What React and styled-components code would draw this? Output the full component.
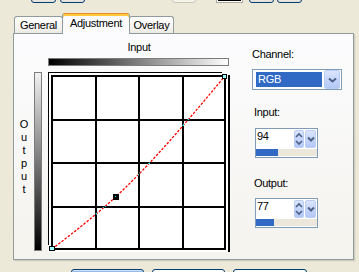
import React from "react";
import styled, { createGlobalStyle } from "styled-components";

const GlobalStyle = createGlobalStyle`
  html, body { margin: 0; padding: 0; background: #ece9d8; }
  body { font-family: "Liberation Sans", Arial, sans-serif; }
`;

const Window = styled.div`
  width: 359px;
  height: 272px;
  overflow: hidden;
  background: #ece9d8;
  font-family: "Liberation Sans", Arial, sans-serif;
  font-size: 11px;
  color: #000;
  letter-spacing: -0.3px;
`;

const TopStrip = styled.div`
  display: flex;
  align-items: flex-end;
  height: 3px;
`;

const XPButton = styled.div`
  box-sizing: border-box;
  flex: none;
  width: ${(p) => p.$w}px;
  height: ${(p) => p.$h ?? 22}px;
  margin-left: ${(p) => p.$ml ?? 0}px;
  border: 1px solid ${(p) => (p.$disabled ? "#c9c7ba" : "#003c74")};
  border-radius: 3px;
  background: ${(p) =>
    p.$disabled ? "#f5f4ea" : "linear-gradient(#ffffff, #f4f3ee 70%, #e3e0d5)"};
  box-shadow: ${(p) =>
    p.$default ? "inset 0 0 0 1px #cee7ff, inset 0 0 0 2px #98b8ea" : "none"};
`;

const Swatch = styled.div`
  box-sizing: border-box;
  flex: none;
  width: ${(p) => p.$w}px;
  height: 22px;
  margin-left: ${(p) => p.$ml}px;
  border: 1px solid #aca899;
  padding: 1px;
  background: #fff;
`;

const SwatchFill = styled.div`
  width: 100%;
  height: 100%;
  background: #000;
`;

const TabRow = styled.div`
  position: relative;
  z-index: 1;
  display: flex;
  align-items: flex-end;
  height: 20px;
  margin-top: 10px;
  padding-left: 14px;
`;

const Tab = styled.div`
  position: relative;
  z-index: ${(p) => (p.$active ? 2 : 1)};
  box-sizing: border-box;
  flex: none;
  width: ${(p) => p.$w}px;
  height: ${(p) => (p.$active ? 21 : 17)}px;
  margin-left: ${(p) => (p.$first ? 0 : -1)}px;
  margin-bottom: ${(p) => (p.$active ? -1 : 0)}px;
  padding-top: ${(p) => (p.$active ? 3 : 2)}px;
  border: 1px solid #919b9c;
  border-bottom: none;
  border-top-color: ${(p) => (p.$active ? "#e68b2c" : "#919b9c")};
  border-radius: 3px 3px 0 0;
  background: ${(p) =>
    p.$active ? "#fcfcfe" : "linear-gradient(#ffffff, #f6f5f1 60%, #ebeae4)"};
  box-shadow: ${(p) => (p.$active ? "inset 0 2px 0 #ffc83c" : "none")};
  text-align: center;
  line-height: 13px;
  white-space: nowrap;
`;

const Panel = styled.div`
  box-sizing: border-box;
  width: 341px;
  height: 227px;
  margin-left: 13px;
  padding-top: 7px;
  border: 1px solid #919b9c;
  background: linear-gradient(#fcfcfe, #f4f3ee);
  box-shadow: 1px 1px 0 #d0cebf, 2px 2px 0 #e3e0d0;
  display: flex;
  align-items: flex-start;
`;

const CurveArea = styled.div`
  display: grid;
  grid-template-columns: 20px 14px 182px;
  grid-template-rows: 17px 14px 180px;
`;

const AxisTitle = styled.div`
  grid-column: 3;
  grid-row: 1;
  text-align: center;
  line-height: 13px;
`;

const HRamp = styled.div`
  grid-column: 3;
  grid-row: 2;
  box-sizing: border-box;
  width: 181px;
  height: 8px;
  border: 1px solid #7c7c7c;
  background: linear-gradient(to right, #000, #fff);
`;

const VRamp = styled.div`
  grid-column: 2;
  grid-row: 3;
  box-sizing: border-box;
  width: 8px;
  height: 179px;
  border: 1px solid #7c7c7c;
  background: linear-gradient(#f2f2f2, #000);
`;

const VLabel = styled.div`
  grid-column: 1;
  grid-row: 3;
  align-self: start;
  margin-top: 46px;
  display: flex;
  flex-direction: column;
  align-items: center;
  line-height: 13px;
`;

const GraphBox = styled.div`
  grid-column: 3;
  grid-row: 3;
  width: 182px;
  height: 180px;
  background: #fff;
  svg { display: block; }
`;

const Side = styled.div`
  margin-left: 22px;
  padding-top: 7px;
  display: flex;
  flex-direction: column;
  align-items: flex-start;
`;

const FieldLabel = styled.div`
  line-height: 13px;
  margin-top: ${(p) => p.$mt ?? 0}px;
  margin-left: ${(p) => p.$ml ?? 0}px;
`;

const Select = styled.div`
  box-sizing: border-box;
  width: 90px;
  height: 21px;
  margin-top: 8px;
  border: 1px solid #7f9db9;
  background: #fff;
  display: flex;
  align-items: center;
  gap: 2px;
  padding: 0 1px 0 3px;
`;

const SelectValue = styled.div`
  flex: 1;
  height: 15px;
  line-height: 15px;
  padding-left: 2px;
  background: #316ac5;
  color: #fff;
`;

const BlueButton = styled.div`
  box-sizing: border-box;
  flex: none;
  width: ${(p) => p.$w}px;
  height: ${(p) => p.$h}px;
  border: 1px solid #bccdf5;
  border-radius: 2px;
  background: linear-gradient(#dbe5fd, #c5d5fb 50%, #b4c8f6);
  display: flex;
  align-items: center;
  justify-content: center;
  svg { display: block; }
`;

const Spinner = styled.div`
  box-sizing: border-box;
  width: 63px;
  height: 30px;
  margin-top: ${(p) => p.$mt}px;
  margin-left: 3px;
  border: 1px solid #7f9db9;
  background: #fff;
  display: flex;
  flex-direction: column;
`;

const SpinTop = styled.div`
  display: flex;
  height: 20px;
  padding: 1px 1px 0 0;
  box-sizing: border-box;
  gap: 1px;
`;

const SpinValue = styled.div`
  flex: 1;
  padding-left: 1px;
  padding-top: 0px;
  line-height: 13px;
`;

const Meter = styled.div`
  height: 7px;
  background: #ebe8db;
`;

const MeterFill = styled.div`
  height: 100%;
  background: #316ac5;
`;

const BottomRow = styled.div`
  display: flex;
  gap: 8px;
  margin-top: 9px;
  padding-left: 71px;
`;

/* ---------- curve math ---------- */
function naturalSpline(pts) {
  const n = pts.length;
  const x = pts.map((p) => p[0]);
  const y = pts.map((p) => p[1]);
  const h = [];
  for (let i = 0; i < n - 1; i++) h.push(x[i + 1] - x[i]);
  const M = new Array(n).fill(0);
  const a = [], b = [], c = [], d = [];
  for (let i = 1; i < n - 1; i++) {
    a.push(h[i - 1]);
    b.push(2 * (h[i - 1] + h[i]));
    c.push(h[i]);
    d.push(6 * ((y[i + 1] - y[i]) / h[i] - (y[i] - y[i - 1]) / h[i - 1]));
  }
  const m = b.length;
  for (let i = 1; i < m; i++) {
    const w = a[i] / b[i - 1];
    b[i] -= w * c[i - 1];
    d[i] -= w * d[i - 1];
  }
  for (let i = m - 1; i >= 0; i--) {
    M[i + 1] = (d[i] - (i < m - 1 ? c[i] * M[i + 2] : 0)) / b[i];
  }
  return (v) => {
    let i = 0;
    while (i < n - 2 && v > x[i + 1]) i++;
    const hi = h[i];
    const A = x[i + 1] - v;
    const B = v - x[i];
    return (
      (M[i] * A ** 3) / (6 * hi) +
      (M[i + 1] * B ** 3) / (6 * hi) +
      (y[i] / hi - (M[i] * hi) / 6) * A +
      (y[i + 1] / hi - (M[i + 1] * hi) / 6) * B
    );
  };
}

const GRID = [4, 48, 91, 135, 177];
const px = (v) => 4 + (v / 255) * 173;
const py = (v) => 177 - (v / 255) * 173;

function CurveGraph({ input, output }) {
  const f = naturalSpline([
    [0, 0],
    [input, output],
    [255, 255],
  ]);
  const pts = [];
  for (let v = 0; v <= 255; v += 1) {
    const o = Math.max(0, Math.min(255, f(v)));
    pts.push(`${px(v).toFixed(2)},${py(o).toFixed(2)}`);
  }
  const poly = pts.join(" ");
  const cx = Math.round(px(input));
  const cy = Math.round(py(output));
  return (
    <svg width="182" height="180" viewBox="0 0 182 180">
      <defs>
        <clipPath id="gridLines">
          {GRID.map((g) => (
            <rect key={"v" + g} x={g - 1} y={3} width={2} height={175} />
          ))}
          {GRID.map((g) => (
            <rect key={"h" + g} x={3} y={g - 1} width={175} height={2} />
          ))}
        </clipPath>
      </defs>
      <g shapeRendering="crispEdges" fill="#000">
        <rect x="0" y="0" width="174" height="1" />
        <rect x="0" y="0" width="1" height="173" />
        <rect x="180" y="3" width="2" height="177" />
        {GRID.map((g) => (
          <rect key={"gv" + g} x={g - 1} y={3} width={2} height={175} />
        ))}
        {GRID.map((g) => (
          <rect key={"gh" + g} x={3} y={g - 1} width={175} height={2} />
        ))}
      </g>
      <polyline
        points={poly}
        fill="none"
        stroke="#ff0000"
        strokeWidth="1.3"
        strokeDasharray="2.5 1.5"
      />
      <polyline
        points={poly}
        fill="none"
        stroke="#00ffff"
        strokeWidth="1.3"
        strokeDasharray="2.5 1.5"
        clipPath="url(#gridLines)"
      />
      <g shapeRendering="crispEdges">
        <rect x="174.5" y="2.5" width="4" height="4" fill="#9ff" stroke="#000" />
        <rect x="1.5" y="174.5" width="5" height="4" fill="#9ff" stroke="#000" />
        <rect x={cx - 3} y={cy - 3} width="6" height="6" fill="#000" />
        <rect x={cx - 1} y={cy - 1} width="1" height="1" fill="#0ff" />
      </g>
    </svg>
  );
}

const ChevronDown = ({ w = 7 }) => (
  <svg width={w + 2} height="6" viewBox={`0 0 ${w + 2} 6`}>
    <polyline
      points={`1,1.5 ${(w + 2) / 2},4.5 ${w + 1},1.5`}
      fill="none"
      stroke="#4d6185"
      strokeWidth="2"
    />
  </svg>
);

const UpDown = () => (
  <svg width="8" height="16" viewBox="0 0 8 16">
    <polyline points="1,6 4,3 7,6" fill="none" stroke="#4d6185" strokeWidth="1.7" />
    <polyline points="1,10 4,13 7,10" fill="none" stroke="#4d6185" strokeWidth="1.7" />
  </svg>
);

function SpinField({ value, mt }) {
  return (
    <Spinner $mt={mt}>
      <SpinTop>
        <SpinValue>{value}</SpinValue>
        <BlueButton $w={10} $h={18}>
          <UpDown />
        </BlueButton>
        <BlueButton $w={11} $h={18}>
          <ChevronDown w={6} />
        </BlueButton>
      </SpinTop>
      <Meter>
        <MeterFill style={{ width: `${(value / 255) * 100}%` }} />
      </Meter>
    </Spinner>
  );
}

export default function App() {
  const input = 94;
  const output = 77;
  return (
    <>
      <GlobalStyle />
      <Window>
        <TopStrip>
          <XPButton $w={25} $ml={31} />
          <XPButton $w={25} $ml={4} />
          <XPButton $w={24} $ml={87} $disabled />
          <Swatch $w={27} $ml={20}>
            <SwatchFill />
          </Swatch>
          <XPButton $w={25} $ml={6} />
          <XPButton $w={25} $ml={3} />
        </TopStrip>

        <TabRow>
          <Tab $w={49} $first>General</Tab>
          <Tab $w={68} $active>Adjustment</Tab>
          <Tab $w={45}>Overlay</Tab>
        </TabRow>

        <Panel>
          <CurveArea>
            <AxisTitle>Input</AxisTitle>
            <HRamp />
            <VLabel>
              {"Output".split("").map((ch, i) => (
                <span key={i}>{ch}</span>
              ))}
            </VLabel>
            <VRamp />
            <GraphBox>
              <CurveGraph input={input} output={output} />
            </GraphBox>
          </CurveArea>

          <Side>
            <FieldLabel>Channel:</FieldLabel>
            <Select>
              <SelectValue>RGB</SelectValue>
              <BlueButton $w={16} $h={19}>
                <ChevronDown w={7} />
              </BlueButton>
            </Select>
            <FieldLabel $mt={16} $ml={2}>Input:</FieldLabel>
            <SpinField value={input} mt={9} />
            <FieldLabel $mt={19} $ml={2}>Output:</FieldLabel>
            <SpinField value={output} mt={8} />
          </Side>
        </Panel>

        <BottomRow>
          <XPButton $w={73} $h={23} $default />
          <XPButton $w={73} $h={23} />
          <XPButton $w={74} $h={23} />
        </BottomRow>
      </Window>
    </>
  );
}
